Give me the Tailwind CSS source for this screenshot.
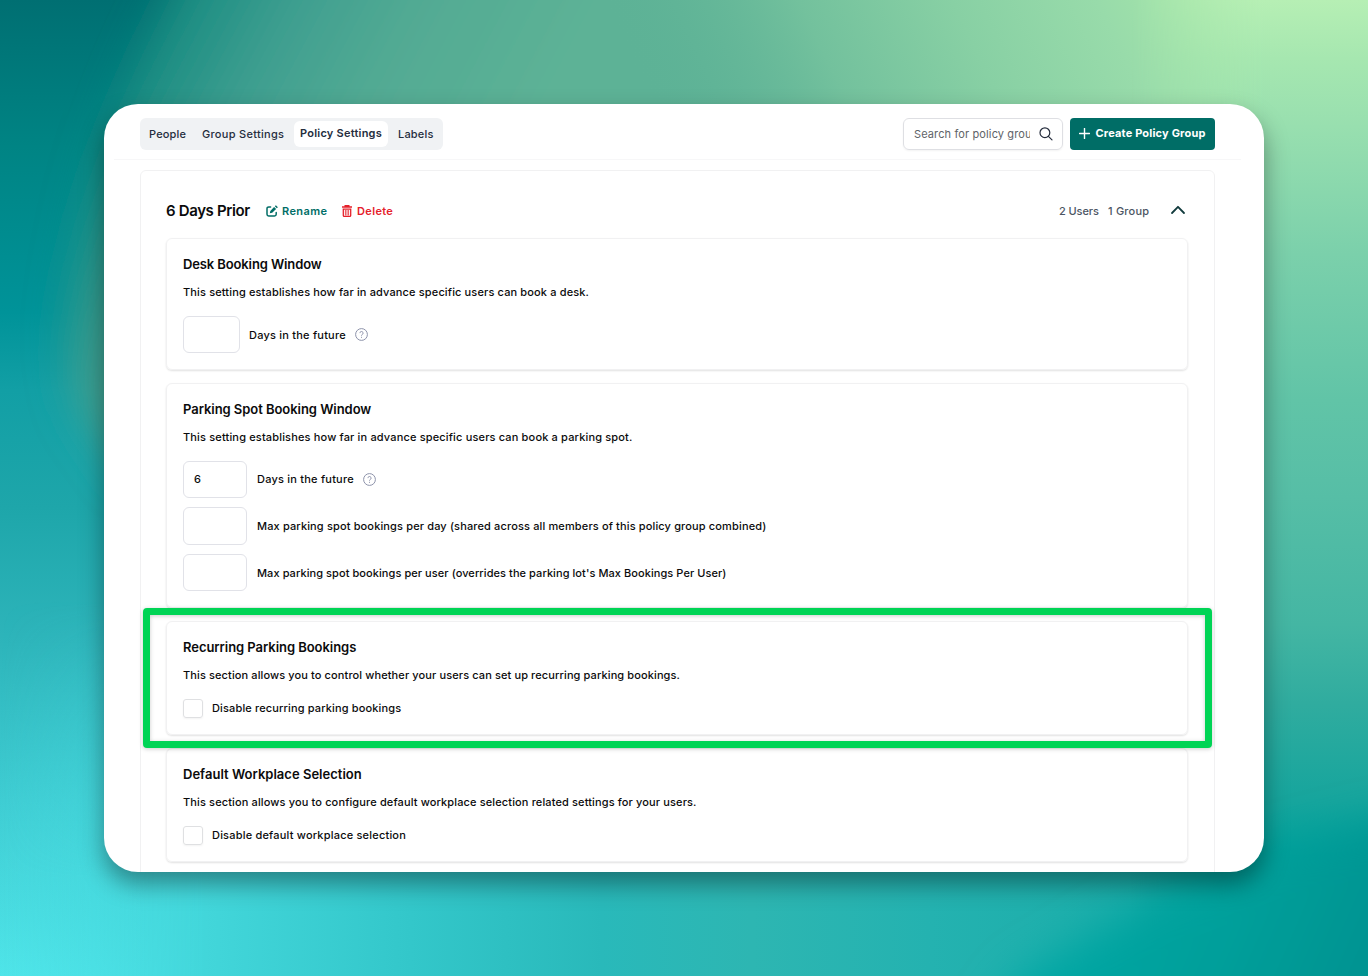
<!DOCTYPE html>
<html lang="en">
<head>
    <meta charset="UTF-8">
    <meta name="viewport" content="width=device-width, initial-scale=1.0">
    <title>Policy Settings</title>
    <script src="https://cdn.jsdelivr.net/npm/@tailwindcss/browser@4"></script>
</head>
<body class="relative w-[1368px] h-[976px] overflow-hidden p-[104px] bg-[#2bb5b3] font-['Inter',sans-serif] text-[11px] font-medium text-[#0b0b0c]">
    <!-- Backdrop: blurred colour mesh -->
    <svg class="absolute inset-0 w-full h-full" viewBox="0 0 1368 976" preserveAspectRatio="none">
        <defs>
            <linearGradient id="left" x1="0" y1="0" x2="0" y2="1">
                <stop offset="0" stop-color="#006f72"/>
                <stop offset=".15" stop-color="#008484"/>
                <stop offset=".32" stop-color="#009399"/>
                <stop offset=".4" stop-color="#129fa5"/>
                <stop offset=".52" stop-color="#1ea6aa"/>
                <stop offset=".66" stop-color="#2eb5bb"/>
                <stop offset=".82" stop-color="#3fcdd3"/>
                <stop offset="1" stop-color="#4fe5e9"/>
            </linearGradient>
            <linearGradient id="right" x1="0" y1="0" x2="0" y2="1">
                <stop offset="0" stop-color="#b6efb4"/>
                <stop offset=".06" stop-color="#a6e7b0"/>
                <stop offset=".13" stop-color="#98dfaf"/>
                <stop offset=".26" stop-color="#7bd0ab"/>
                <stop offset=".41" stop-color="#61c4a7"/>
                <stop offset=".51" stop-color="#56bea6"/>
                <stop offset=".64" stop-color="#44b6a3"/>
                <stop offset=".72" stop-color="#30ac9f"/>
                <stop offset=".82" stop-color="#16a59d"/>
                <stop offset=".88" stop-color="#00a19b"/>
                <stop offset="1" stop-color="#009792"/>
            </linearGradient>
            <linearGradient id="bottom" x1="0" y1="0" x2="1368" y2="0" gradientUnits="userSpaceOnUse">
                <stop offset="0" stop-color="#4be0e5" stop-opacity="0"/>
                <stop offset=".15" stop-color="#42d6da"/>
                <stop offset=".3" stop-color="#33c7ca"/>
                <stop offset=".44" stop-color="#29b9ba"/>
                <stop offset=".55" stop-color="#2db6b2"/>
                <stop offset=".68" stop-color="#24b2b0"/>
                <stop offset="1" stop-color="#10a8a2"/>
            </linearGradient>
            <linearGradient id="green" x1="165" y1="0" x2="505" y2="180" gradientUnits="userSpaceOnUse">
                <stop offset="0" stop-color="#12877c"/>
                <stop offset=".08" stop-color="#1f8f84"/>
                <stop offset=".31" stop-color="#3f9f90"/>
                <stop offset=".58" stop-color="#52aa93"/>
                <stop offset="1" stop-color="#5db296"/>
            </linearGradient>
            <linearGradient id="lime" x1="600" y1="0" x2="1222" y2="-297" gradientUnits="userSpaceOnUse">
                <stop offset="0" stop-color="#5db296" stop-opacity="0"/>
                <stop offset=".26" stop-color="#73c19d"/>
                <stop offset=".46" stop-color="#88d0a4"/>
                <stop offset=".65" stop-color="#98dbaa"/>
                <stop offset=".78" stop-color="#a5e5aa"/>
                <stop offset="1" stop-color="#b8efb4"/>
            </linearGradient>
            <linearGradient id="teal" x1="1080" y1="850" x2="1368" y2="976" gradientUnits="userSpaceOnUse"><stop offset="0" stop-color="#00a7a5"/><stop offset=".5" stop-color="#00a09b"/><stop offset="1" stop-color="#009391"/></linearGradient>
            <linearGradient id="fadeX" x1="1130" y1="0" x2="1264" y2="0" gradientUnits="userSpaceOnUse"><stop offset="0" stop-color="#000"/><stop offset="1" stop-color="#fff"/></linearGradient>
            <linearGradient id="fadeY" x1="0" y1="600" x2="0" y2="880" gradientUnits="userSpaceOnUse"><stop offset="0" stop-color="#000"/><stop offset="1" stop-color="#fff"/></linearGradient>
            <mask id="maskX"><rect x="1100" width="268" height="976" fill="url(#fadeX)"/></mask>
            <mask id="maskY"><rect y="560" width="1368" height="416" fill="url(#fadeY)"/></mask>
            <filter id="blur" x="-20%" y="-20%" width="140%" height="140%"><feGaussianBlur stdDeviation="20"/></filter>
        </defs>
        <rect width="1368" height="976" fill="url(#left)"/>
        <rect width="1368" height="976" fill="url(#bottom)" mask="url(#maskY)"/>
        <path d="M220 -120 L165 0 Q100 130 80 240 Q56 350 80 410 L130 480 L1300 560 L1450 560 L1450 -120Z" fill="url(#green)" filter="url(#blur)"/>
        <rect x="560" y="-10" width="808" height="300" fill="url(#lime)"/>
        <rect x="1100" width="268" height="976" fill="url(#right)" mask="url(#maskX)"/>
        <path d="M960 1060 L1020 976 L1150 900 L1290 845 L1368 825 L1450 810 L1450 1060Z" fill="url(#teal)" filter="url(#blur)"/>
    </svg>

    <div class="relative w-[1160px] h-[768px] bg-white rounded-[34px] shadow-[0_12px_24px_rgba(0,0,0,0.38)]">
        <div class="h-full overflow-hidden rounded-[34px]">
            <!-- Top bar -->
            <header class="flex items-center justify-between h-14 ml-2.5 mr-[23px] px-[26px] pt-1 border-b border-[#f7f7f8]">
                <nav class="flex items-center h-8 px-1 rounded-md bg-[#f0f2f4] text-[#252d3d]">
                    <a class="w-[53px] pt-px pl-[5px] tracking-[0.15px]">People</a>
                    <a class="w-[97px] pt-px pl-[5px] whitespace-nowrap tracking-[0.3px]">Group Settings</a>
                    <a class="flex items-center justify-center w-[94px] h-[26px] mr-[5px] pb-px rounded-md bg-white font-semibold whitespace-nowrap tracking-[0.23px]">Policy Settings</a>
                    <a class="w-[46px] pt-px pl-[5px] tracking-[0.2px]">Labels</a>
                </nav>
                <div class="flex gap-[7px]">
                    <div class="flex items-center w-[160px] h-8 pl-2.5 pr-[9px] border border-[#dedfe3] rounded-md shadow-xs">
                        <span class="w-[116px] mr-[9px] pt-px overflow-hidden whitespace-nowrap font-normal text-[#606368] tracking-[0.12px]">Search for policy group</span>
                        <svg class="w-[14px] h-[14px] shrink-0" viewBox="0 0 14 14" fill="none" stroke="#252d3d" stroke-width="1.2" stroke-linecap="round"><circle cx="5.9" cy="5.7" r="4.9"/><path d="M9.4 9.3 13 12.9"/></svg>
                    </div>
                    <button class="flex items-center justify-center gap-[5px] w-[145px] h-8 rounded bg-[#006d66] text-white font-bold whitespace-nowrap">
                        <svg class="w-[11px] h-[11px]" viewBox="0 0 11 11" stroke="currentColor" stroke-width="1.4" stroke-linecap="round"><path d="M5.5.5v10M.5 5.5h10"/></svg>
                        <span class="tracking-[0.18px]">Create Policy Group</span>
                    </button>
                </div>
            </header>

            <!-- Policy group -->
            <main class="w-[1075px] h-[760px] mt-2.5 ml-9 px-[25px] border border-[#f1f1f2] rounded-md tracking-[0.14px]">
                <div class="flex items-center h-[67px] pt-[13px]">
                    <h1 class="w-[100px] text-[15px] font-semibold whitespace-nowrap tracking-[-0.36px]">6 Days Prior</h1>
                    <a class="flex items-center w-[76px] gap-1 font-semibold text-[#006d66] tracking-[0.4px]">
                        <svg class="w-3 h-3" viewBox="0 0 12 12" fill="none" stroke="currentColor" stroke-width="1.5" stroke-linecap="round" stroke-linejoin="round"><path d="M4.6 1.9H2.7A1.7 1.7 0 0 0 1 3.6v5.7A1.7 1.7 0 0 0 2.7 11h5.8a1.7 1.7 0 0 0 1.7-1.7V7.4"/><path d="M3.8 8.3 4.3 5.9 8.1 2l2 2L6.2 7.8Z" fill="currentColor" stroke="none"/><path d="M8.8 1.3 9.9.2l2 2-1.1 1.1Z" fill="currentColor" stroke="none"/></svg>
                        Rename
                    </a>
                    <a class="flex items-center gap-[5px] font-semibold text-[#e5202b] tracking-[0.35px]">
                        <svg class="w-[10px] h-3" viewBox="0 0 10 12" fill="none" stroke="currentColor"><path d="M0 2h10M3.2 2V.7h3.6V2" stroke-width="1.4"/><path d="M1.3 4.2h7.4v6.2q0 .9-.9.9H2.2q-.9 0-.9-.9Z" stroke-width="1.3"/><path d="M3.4 5v5.5M5 5v5.5M6.6 5v5.5" stroke-width=".8"/></svg>
                        Delete
                    </a>
                    <div class="flex items-center ml-auto mr-[3px] text-[#4b5563] tracking-[-0.1px]">
                        <span class="w-[49px]">2 Users</span>
                        <span class="w-[62px] tracking-[0.2px]">1 Group</span>
                        <svg class="w-4 h-[10px] mb-0.5" viewBox="0 0 16 10" fill="none" stroke="#123b3d" stroke-width="1.8" stroke-linecap="round" stroke-linejoin="round"><path d="M2 8l6-6.2L14 8"/></svg>
                    </div>
                </div>

                <div class="flex flex-col gap-[13px] w-[1022px]">
                    <section class="h-[132px] pt-[17px] px-4 border border-[#f1f1f2] rounded-md shadow-[0_1px_2px_rgba(0,0,0,0.12)]">
                        <h2 class="text-[13px] leading-4 font-semibold tracking-[-0.12px]">Desk Booking Window</h2>
                        <p class="mt-3 leading-4">This setting establishes how far in advance specific users can book a desk.</p>
                        <div class="flex items-center mt-4">
                            <div class="w-[57px] h-[37px] mr-[9px] border border-[#e1e2e8] rounded-md"></div>
                            <span class="w-[106px] pt-px tracking-[0.22px]">Days in the future</span>
                            <svg class="w-[13px] h-[13px]" viewBox="0 0 13 13" fill="none" stroke="#8d92aa"><circle cx="6.5" cy="6.5" r="5.9"/><path d="M4.9 5.1a1.6 1.6 0 1 1 2.4 1.4c-.6.3-.8.5-.8 1.1M6.5 8.8v1"/></svg>
                        </div>
                    </section>

                    <section class="h-[225px] pt-[17px] px-4 border border-[#f1f1f2] rounded-md shadow-[0_1px_2px_rgba(0,0,0,0.12)]">
                        <h2 class="text-[13px] leading-4 font-semibold tracking-[-0.05px]">Parking Spot Booking Window</h2>
                        <p class="mt-3 leading-4 tracking-[0.16px]">This setting establishes how far in advance specific users can book a parking spot.</p>
                        <div class="flex items-center mt-4">
                            <div class="flex items-center w-16 h-[37px] mr-2.5 pl-2.5 border border-[#e1e2e8] rounded-md">6</div>
                            <span class="w-[106px] tracking-[0.22px]">Days in the future</span>
                            <svg class="w-[13px] h-[13px]" viewBox="0 0 13 13" fill="none" stroke="#8d92aa"><circle cx="6.5" cy="6.5" r="5.9"/><path d="M4.9 5.1a1.6 1.6 0 1 1 2.4 1.4c-.6.3-.8.5-.8 1.1M6.5 8.8v1"/></svg>
                        </div>
                        <div class="flex items-center mt-[9px]">
                            <div class="w-16 h-[38px] mr-2.5 border border-[#e1e2e8] rounded-md"></div>
                            <span>Max parking spot bookings per day (shared across all members of this policy group combined)</span>
                        </div>
                        <div class="flex items-center mt-[9px]">
                            <div class="w-16 h-[37px] mr-2.5 border border-[#e1e2e8] rounded-md"></div>
                            <span class="pt-px tracking-[0.07px]">Max parking spot bookings per user (overrides the parking lot's Max Bookings Per User)</span>
                        </div>
                    </section>

                    <section class="relative h-[114px] pt-[17px] px-4 border border-[#f1f1f2] rounded-md shadow-[0_1px_2px_rgba(0,0,0,0.12)]">
                        <h2 class="text-[13px] leading-4 font-semibold tracking-[-0.05px]">Recurring Parking Bookings</h2>
                        <p class="mt-3 leading-4 tracking-[0.11px]">This section allows you to control whether your users can set up recurring parking bookings.</p>
                        <div class="flex items-center mt-4">
                            <span class="w-5 h-[19px] mr-[9px] border border-[#dfe0e2] rounded-[3px] shadow-xs"></span>
                            <span class="pb-px">Disable recurring parking bookings</span>
                        </div>
                        <!-- Highlight around the section -->
                        <div class="absolute z-10 -top-[14px] -left-[24px] w-[1069px] h-[140px] border-[7px] border-[#00d455] rounded-[4px] drop-shadow-[0_1px_2px_rgba(0,0,0,0.2)]"></div>
                    </section>

                    <section class="h-[114px] pt-[17px] px-4 border border-[#f1f1f2] rounded-md shadow-[0_1px_2px_rgba(0,0,0,0.12)]">
                        <h2 class="text-[13px] leading-4 font-semibold tracking-[0.02px]">Default Workplace Selection</h2>
                        <p class="mt-3 leading-4 tracking-[0.13px]">This section allows you to configure default workplace selection related settings for your users.</p>
                        <div class="flex items-center mt-4">
                            <span class="w-5 h-[19px] mr-[9px] border border-[#dfe0e2] rounded-[3px] shadow-xs"></span>
                            <span class="pb-px tracking-[0.2px]">Disable default workplace selection</span>
                        </div>
                    </section>
                </div>
            </main>
        </div>
    </div>
</body>
</html>
